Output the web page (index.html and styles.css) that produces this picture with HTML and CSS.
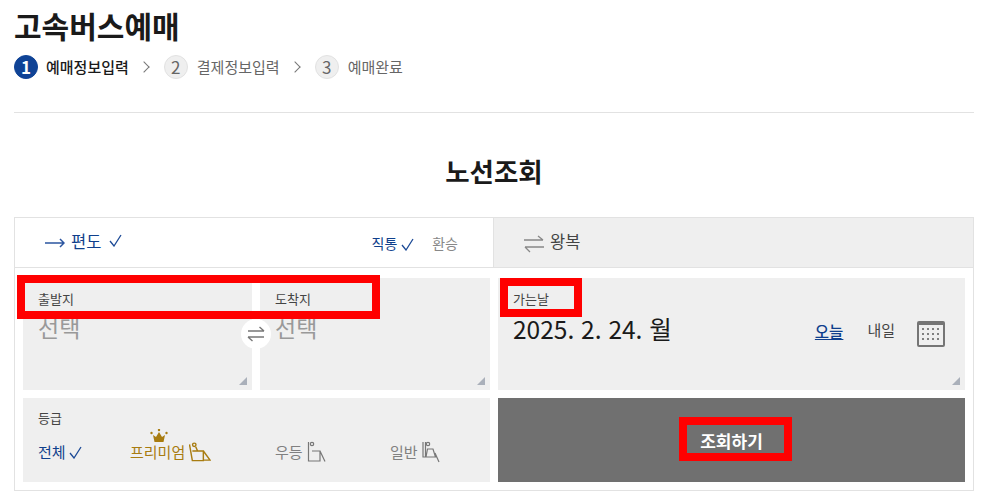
FILE: index.html

```html
<!DOCTYPE html>
<html lang="ko">
<head>
  <meta charset="UTF-8">
  <title>고속버스예매</title>
  <link rel="stylesheet" href="styles.css">
</head>
<body>

  <h1 class="titulo">고속버스예매</h1>

  <ol class="passos">
    <li class="passo ativo"><span class="numero">1</span>예매정보입력</li>
    <li class="passo"><span class="numero">2</span>결제정보입력</li>
    <li class="passo"><span class="numero">3</span>예매완료</li>
  </ol>

  <h2 class="subtitulo">노선조회</h2>

  <div class="cartao">
    <div class="abas">
      <div class="aba aba-ativa">
        <svg class="seta" width="20" height="10" viewBox="0 0 20 10"><path d="M0 5H19M15 1l4 4-4 4" fill="none" stroke="#2b55a0" stroke-width="1.5"/></svg>
        <span class="aba-nome">편도</span>
        <svg class="check" width="13" height="13" viewBox="0 0 13 13"><path d="M1 7l4 5 7-11" fill="none" stroke="#1c4a96" stroke-width="1.3"/></svg>
        <span class="rota rota-ativa">직통
          <svg class="check" width="13" height="13" viewBox="0 0 13 13"><path d="M1 7l4 5 7-11" fill="none" stroke="#1c4a96" stroke-width="1.3"/></svg>
        </span>
        <span class="rota">환승</span>
      </div>
      <div class="aba aba-inativa">
        <svg class="ida-volta" width="20" height="18" viewBox="0 0 20 18"><path d="M0 5H19M14 1l5 4M20 12H1M6 17l-5-5" fill="none" stroke="#888" stroke-width="1.3"/></svg>
        <span class="aba-nome">왕복</span>
      </div>
    </div>

    <div class="grade">
      <div class="rotas">
        <div class="campo">
          <span class="rotulo">출발지</span>
          <span class="selecao">선택</span>
        </div>
        <div class="campo">
          <span class="rotulo">도착지</span>
          <span class="selecao">선택</span>
        </div>
        <span class="trocar">
          <svg width="18" height="16" viewBox="0 0 18 16"><path d="M1 5H17M12.500 1L17 5M17 11H1M5.500 15L1 11" fill="none" stroke="#777" stroke-width="1.400"/></svg>
        </span>
      </div>

      <div class="campo campo-data">
        <span class="rotulo">가는날</span>
        <div class="linha-data">
          <span class="data">2025. 2. 24. 월</span>
          <a class="hoje">오늘</a>
          <span class="amanha">내일</span>
          <svg class="calendario" width="28" height="26" viewBox="0 0 28 26">
            <rect x="1" y="1" width="26" height="24" rx="1" fill="none" stroke="#757575" stroke-width="2"/>
            <rect x="1" y="1" width="26" height="3" fill="#757575"/>
            <g fill="#808080">
              <rect x="5" y="7" width="2" height="2"/><rect x="10" y="7" width="2" height="2"/><rect x="15" y="7" width="2" height="2"/><rect x="20" y="7" width="2" height="2"/>
              <rect x="5" y="12" width="2" height="2"/><rect x="10" y="12" width="2" height="2"/><rect x="15" y="12" width="2" height="2"/><rect x="20" y="12" width="2" height="2"/>
              <rect x="5" y="17" width="2" height="2"/><rect x="10" y="17" width="2" height="2"/><rect x="15" y="17" width="2" height="2"/><rect x="20" y="17" width="2" height="2"/>
            </g>
          </svg>
        </div>
      </div>

      <div class="campo-classe">
        <span class="rotulo">등급</span>
        <div class="classes">
          <span class="classe classe-todas">전체
            <svg width="13" height="13" viewBox="0 0 13 13"><path d="M1 7l4 5 7-11" fill="none" stroke="#1c4a96" stroke-width="1.3"/></svg>
          </span>
          <span class="classe classe-premium">
            <svg class="coroa" width="18" height="14" viewBox="0 0 18 14"><path d="M3 6l3 2 3-5 3 5 3-2-1.500 7h-9z" fill="#a87c10"/><circle cx="1.500" cy="4" r="1.200" fill="#a87c10"/><circle cx="9" cy="1" r="1.200" fill="#a87c10"/><circle cx="16.500" cy="4" r="1.200" fill="#a87c10"/></svg>
            프리미엄
            <svg width="22" height="22" viewBox="0 0 23 22"><g fill="none" stroke="#a87c10" stroke-width="1.500"><circle cx="5.500" cy="3.500" r="1.800"/><path d="M.5 3l3 17H15V10H3.500M7 5.500l2 4.500M15 10l7 9.500H15"/></g></svg>
          </span>
          <span class="classe classe-uteung">우등
            <svg width="19" height="22" viewBox="0 0 19 22"><g fill="none" stroke="#777" stroke-width="1.200"><circle cx="5" cy="3" r="1.700"/><path d="M1.500 1v19H13V10H5M13 10l5 10.500"/></g></svg>
          </span>
          <span class="classe">일반
            <svg width="18" height="22" viewBox="0 0 18 22"><g fill="none" stroke="#777" stroke-width="1.200"><circle cx="6" cy="3" r="1.700"/><path d="M1 1v15h12.500L11 8H5.500l-1.500 8M3.500 1v15M13 12l4 9"/></g></svg>
          </span>
        </div>
      </div>

      <button class="botao-consulta">조회하기</button>
    </div>
  </div>

  <div class="marca marca-rotas"></div>
  <div class="marca marca-data"></div>
  <div class="marca marca-botao"></div>

</body>
</html>
```

FILE: styles.css

```css
* {
  box-sizing: border-box;
}
body {
  margin: 0;
  padding: 0 11px 0 14px;
  height: 499px;
  overflow: hidden;
  position: relative;
  background-color: white;
  color: #1a1a1a;
  font-family: "Noto Sans CJK KR", "Noto Sans", sans-serif;
}
.titulo {
  margin: 0;
  padding-top: 3px;
  height: 55px;
  font-size: 30px;
  line-height: 44px;
  font-weight: 700;
}
.passos {
  list-style: none;
  margin: 0;
  padding: 0;
  height: 58px;
  display: flex;
  align-items: flex-start;
  border-bottom: 1px solid #e2e2e2;
  font-size: 15px;
  line-height: 24px;
  color: #666;
}
.passo {
  display: flex;
  align-items: center;
}
.passo + .passo::before {
  content: "";
  width: 7px;
  height: 7px;
  margin: 0 16px 0 11px;
  border-top: 1px solid #777;
  border-right: 1px solid #777;
  transform: rotate(45deg);
}
.passo + .passo .numero {
  margin-right: 9px;
}
.ativo {
  color: #1a1a1a;
  font-weight: 500;
}
.numero {
  width: 24px;
  height: 24px;
  margin-right: 8px;
  border-radius: 50%;
  background-color: #efefef;
  border: 1px solid #e2e2e2;
  text-align: center;
  font-size: 17px;
  line-height: 22px;
  font-weight: 400;
}
.ativo .numero {
  background-color: #0f4396;
  border-color: #0f4396;
  color: white;
  font-weight: 700;
}
.subtitulo {
  margin: 0;
  height: 104px;
  padding-top: 37px;
  text-align: center;
  font-size: 26.500px;
  line-height: 42px;
  font-weight: 700;
}
.cartao {
  width: 960px;
  height: 274px;
  border: 1px solid #e2e2e2;
}
.abas {
  display: flex;
  height: 50px;
  border-bottom: 1px solid #e2e2e2;
}
.aba {
  display: flex;
  align-items: center;
  font-size: 16.500px;
}
.aba-ativa {
  width: 479px;
  padding: 0 35px 0 30px;
  border-right: 1px solid #e2e2e2;
  color: #0f3f8c;
}
.aba-inativa {
  flex: 1;
  padding-left: 30px;
  background-color: #efefef;
  color: #444;
}
.aba-nome {
  margin: -4px 0 0 6px;
  line-height: 24px;
}
.aba-ativa .check {
  margin: -4px 0 0 8px;
}
.seta {
  margin-top: 1px;
}
.ida-volta {
  margin-top: 3px;
}
.rota {
  font-size: 14px;
  color: #888;
  margin-left: 18px;
}
.rota-ativa {
  margin-left: auto;
  color: #0f3f8c;
}
.rota .check {
  margin: 0;
  vertical-align: -2px;
}
.grade {
  display: grid;
  grid-template-columns: 467px 467px;
  grid-template-rows: 112px 84px;
  gap: 8px;
  padding: 10px 8px;
}
.rotas {
  display: grid;
  grid-template-columns: 229px 230px;
  gap: 8px;
  position: relative;
}
.campo {
  position: relative;
  background-color: #efefef;
  padding: 12px 15px;
}
.campo::after {
  content: "";
  position: absolute;
  right: 5px;
  bottom: 5px;
  border-style: solid;
  border-width: 0 0 8px 8px;
  border-color: transparent transparent #aab0ba transparent;
}
.rotulo {
  display: block;
  font-size: 13px;
  line-height: 18px;
  color: #444;
}
.selecao {
  display: block;
  margin-top: 3px;
  font-size: 23px;
  line-height: 32px;
  color: #999;
}
.trocar {
  position: absolute;
  left: 218px;
  top: 41px;
  width: 30px;
  height: 30px;
  border-radius: 50%;
  background-color: white;
  display: flex;
  align-items: center;
  justify-content: center;
}
.linha-data {
  display: flex;
  align-items: center;
  margin-top: 4px;
  height: 34px;
}
.data {
  font-size: 24.500px;
  line-height: 34px;
  color: #1a1a1a;
}
.hoje {
  margin: 3px 0 0 auto;
  font-size: 15.500px;
  font-weight: 500;
  color: #0f3f8c;
  text-decoration: underline;
}
.amanha {
  margin: 1px 0 0 24px;
  font-size: 15px;
  color: #444;
}
.calendario {
  margin: 10px 5px 0 22px;
}
.campo-classe {
  background-color: #efefef;
  padding: 11px 15px;
}
.classes {
  display: flex;
  align-items: flex-end;
  margin-top: 13px;
  font-size: 15px;
  color: #808080;
}
.classe {
  position: relative;
  display: flex;
  align-items: center;
  gap: 4px;
  line-height: 24px;
}
.classe-todas {
  width: 92px;
  color: #0f3f8c;
}
.classe-todas svg {
  margin-left: -1px;
}
.classe-premium {
  width: 145px;
  color: #a87c10;
}
.classe-uteung {
  width: 115px;
}
.coroa {
  position: absolute;
  left: 20px;
  top: -11px;
}
.botao-consulta {
  border: none;
  background-color: #707070;
  color: white;
  font-family: inherit;
  font-size: 17px;
  font-weight: 700;
  padding: 0;
}
.marca {
  position: absolute;
  border: 8px solid #ff0000;
}
.marca-rotas {
  left: 17px;
  top: 275px;
  width: 363px;
  height: 44px;
}
.marca-data {
  left: 500px;
  top: 278px;
  width: 82px;
  height: 39px;
}
.marca-botao {
  left: 679px;
  top: 417px;
  width: 113px;
  height: 44px;
}
```
